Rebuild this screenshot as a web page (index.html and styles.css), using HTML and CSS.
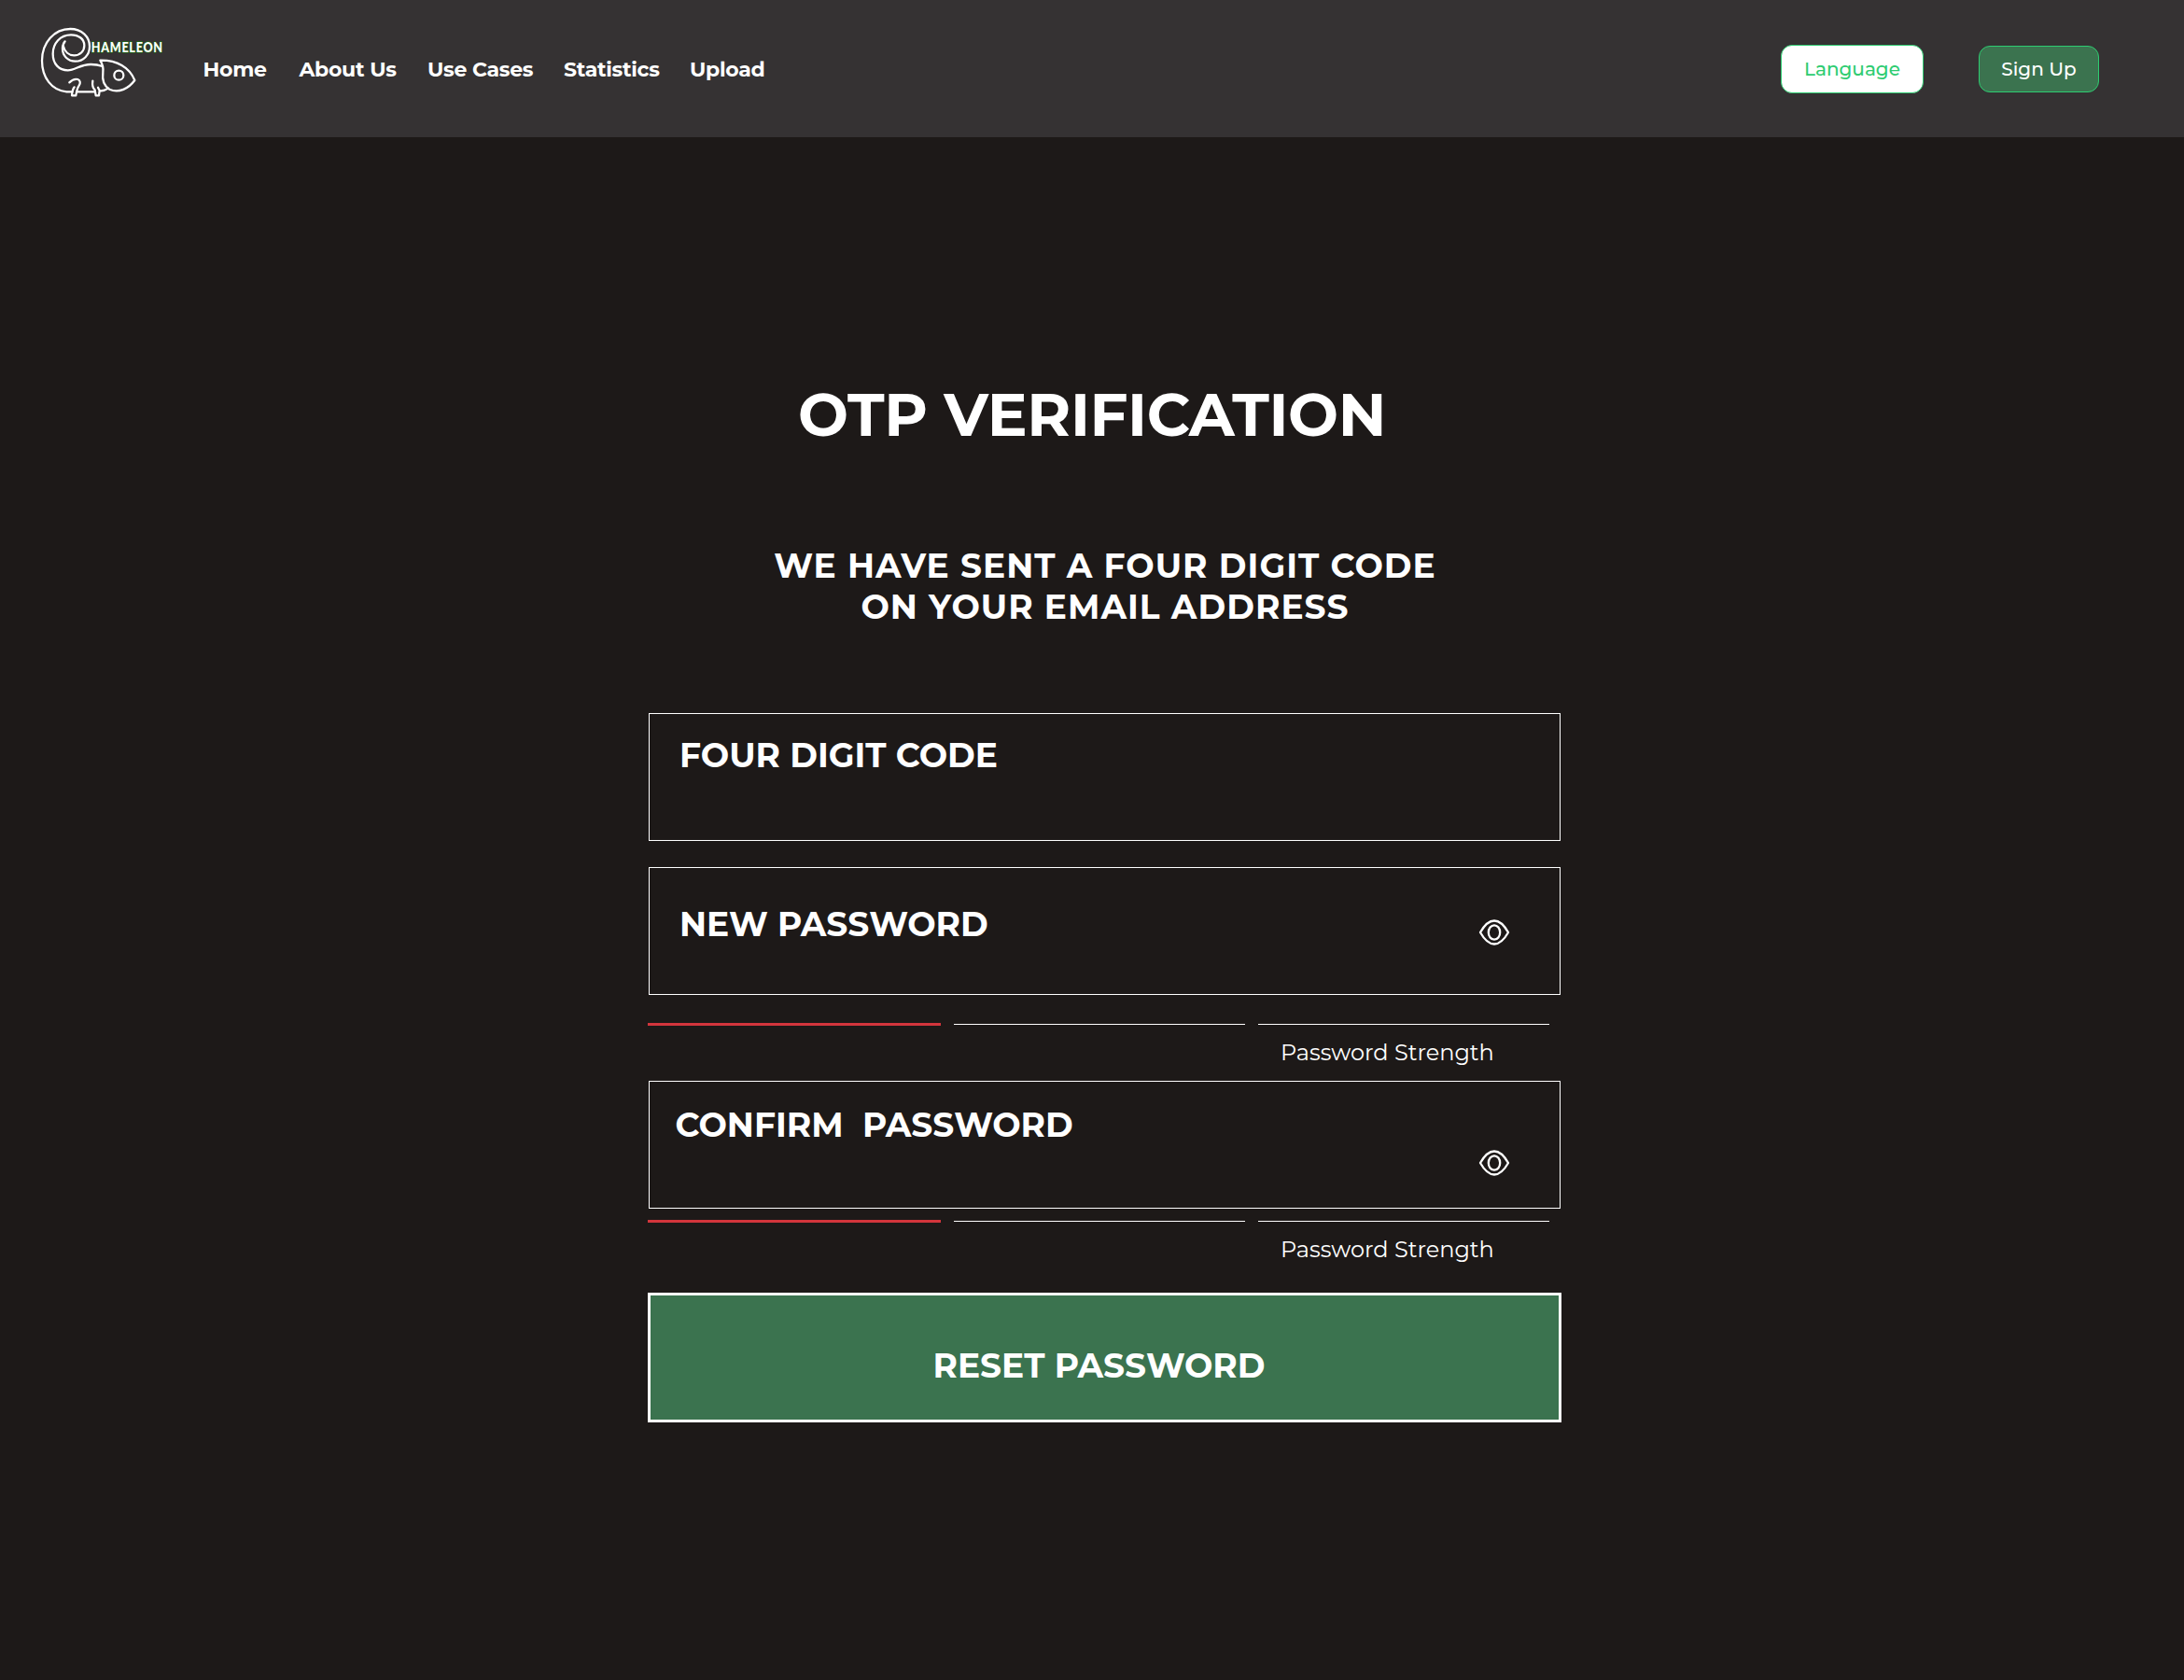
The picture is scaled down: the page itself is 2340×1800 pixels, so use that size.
FILE: index.html
```html
<!DOCTYPE html>
<html lang="en">
<head>
<meta charset="utf-8">
<title>Chameleon – OTP Verification</title>
<link rel="stylesheet" href="styles.css">
</head>
<body>
<header class="header">
  <a class="logo" aria-label="Chameleon">
    <svg width="160" height="100" viewBox="0 0 480 300" fill="none" stroke="#fff" stroke-width="6.8" stroke-linecap="round" stroke-linejoin="round">
      <path d="M142 250H124C76 246 45 204 45 150C45 92 84 48 136 48C172 48 198 72 198 104C198 132 178 152 152 152C128 152 111 134 111 112C111 102 114 94 119 88"/>
      <path d="M113 102C118 122 132 133 148 133C168 133 181 119 181 101C181 81 164 67 138 67C104 67 80 94 80 128C80 161 100 181 128 181C152 181 168 162 202 162C216 162 228 164 239 168"/>
      <path d="M133 220C142 211 152 208 160 210C169 213 169 223 164 230C158 238 156 248 154 262H141C142 250 143 241 149 235"/>
      <path d="M158 250H213"/>
      <path d="M208 215C206 228 208 238 215 244L218 262H228L230 246L225 236M231 248C241 247 251 244 258 239"/>
      <path d="M232 149C240 162 243 174 241 188C238 210 244 231 262 242C292 256 324 239 343 213C326 171 286 148 232 149Z"/>
      <circle cx="292" cy="197" r="15"/>
      <text class="logo-word" transform="translate(203 124) scale(.84 1)" textLength="273" lengthAdjust="spacing">HAMELEON</text>
    </svg>
  </a>
  <nav class="nav">
    <a>Home</a><a>About Us</a><a>Use Cases</a><a>Statistics</a><a>Upload</a>
  </nav>
  <div class="actions">
    <button class="btn btn-language">Language</button>
    <button class="btn btn-signup">Sign Up</button>
  </div>
</header>
<main class="main">
  <h1 class="title">OTP VERIFICATION</h1>
  <div class="form">
    <p class="subtitle">WE HAVE SENT A FOUR DIGIT CODE<br>ON YOUR EMAIL ADDRESS</p>
    <div class="field field-code"><span class="label">FOUR DIGIT CODE</span></div>
    <div class="field field-new">
      <span class="label">NEW PASSWORD</span>
      <svg class="eye" width="34" height="30" viewBox="0 0 34 30" fill="none" stroke="#fff" stroke-width="2.3"><path d="M2 15C6 8 11 2.500 17 2.500S28 8 32 15C28 22 23 27.500 17 27.500S6 22 2 15Z" stroke-linejoin="round"/><ellipse cx="17" cy="15" rx="6.200" ry="7.700"/></svg>
    </div>
    <div class="strength strength-new">
      <div class="bars"><i class="bar bar-weak"></i><i class="bar"></i><i class="bar"></i></div>
      <p class="strength-text">Password Strength</p>
    </div>
    <div class="field field-confirm">
      <span class="label">CONFIRM&nbsp; PASSWORD</span>
      <svg class="eye" width="34" height="30" viewBox="0 0 34 30" fill="none" stroke="#fff" stroke-width="2.3"><path d="M2 15C6 8 11 2.500 17 2.500S28 8 32 15C28 22 23 27.500 17 27.500S6 22 2 15Z" stroke-linejoin="round"/><ellipse cx="17" cy="15" rx="6.200" ry="7.700"/></svg>
    </div>
    <div class="strength strength-confirm">
      <div class="bars"><i class="bar bar-weak"></i><i class="bar"></i><i class="bar"></i></div>
      <p class="strength-text">Password Strength</p>
    </div>
    <button class="reset">RESET PASSWORD</button>
  </div>
</main>
</body>
</html>
```
FILE: styles.css
```css
* { box-sizing: border-box; margin: 0; }

body {
  min-height: 1800px;
  background: #1d1918;
  color: #fff;
  font-family: Montserrat, Inter, sans-serif;
}

.header {
  display: flex;
  align-items: center;
  height: 147px;
  padding: 1px 91px 0 30px;
  background: #353233;
}

.logo { height: 100px; margin-top: -18px; }
.logo svg { display: block; }
.logo-word {
  fill: #fff;
  stroke: #1f6a14;
  stroke-width: 4px;
  paint-order: stroke;
  font: 900 45px Lato, sans-serif;
}

.nav {
  display: grid;
  grid-template-columns: 103px 137.5px 146px 135px auto;
  margin-left: 27.5px;
  padding-top: 2px;
  font-size: 22px;
  font-weight: 700;
  line-height: 28px;
  letter-spacing: -0.28px;
}

.actions {
  display: flex;
  align-items: center;
  gap: 59px;
  margin-left: auto;
}

.btn {
  border: 1px solid #2ecc71;
  border-radius: 12px;
  padding: 0;
  font: 500 20px/24px Montserrat, Inter, sans-serif;
}
.btn-language { width: 153px; height: 52px; background: #fff; color: #2ecc71; }
.btn-signup { width: 129px; height: 50px; background: #3b734f; color: #fff; }

.main {
  display: flex;
  flex-direction: column;
  align-items: center;
  padding-top: 258px;
}

.title {
  font-size: 64px;
  font-weight: 700;
  line-height: 78px;
  letter-spacing: -0.38px;
}

.form {
  display: flex;
  flex-direction: column;
  width: 979px;
  margin: 101px 0 0 27px;
}

.subtitle {
  margin-bottom: 92px;
  padding-left: 1px;
  font-size: 36px;
  font-weight: 700;
  line-height: 44px;
  letter-spacing: 1.02px;
  text-align: center;
}

.field {
  display: flex;
  justify-content: space-between;
  align-items: flex-start;
  height: 137px;
  margin: 0 1px;
  padding: 0 53.5px 0 32px;
  border: 1px solid #fff;
}
.field-code { padding-top: 22px; margin-bottom: 28px; }
.field-new { padding-top: 38px; }
.field-confirm { padding: 24px 53.5px 0 27.5px; }

.label { font-size: 36px; font-weight: 700; line-height: 44px; }

.field-new .eye { margin-top: 16px; }
.field-confirm .eye { margin-top: 48px; }

.bars {
  display: grid;
  grid-template-columns: 314px 312px 312px;
  column-gap: 14px;
  align-items: center;
  height: 3px;
}
.bar { height: 1px; background: #fff; }
.bar-weak { height: 3px; background: #d3353c; }

.strength-new { margin: 30px 0 15px; }
.strength-confirm { margin: 12px 0 31px; }
.strength-text {
  margin: 14px 0 0 678px;
  font-size: 24px;
  font-weight: 400;
  line-height: 30px;
}

.reset {
  height: 139px;
  padding: 16px 12px 0 0;
  border: 3px solid #fff;
  background: #3b734f;
  color: #fff;
  font: 700 36px/44px Montserrat, Inter, sans-serif;
}
```
